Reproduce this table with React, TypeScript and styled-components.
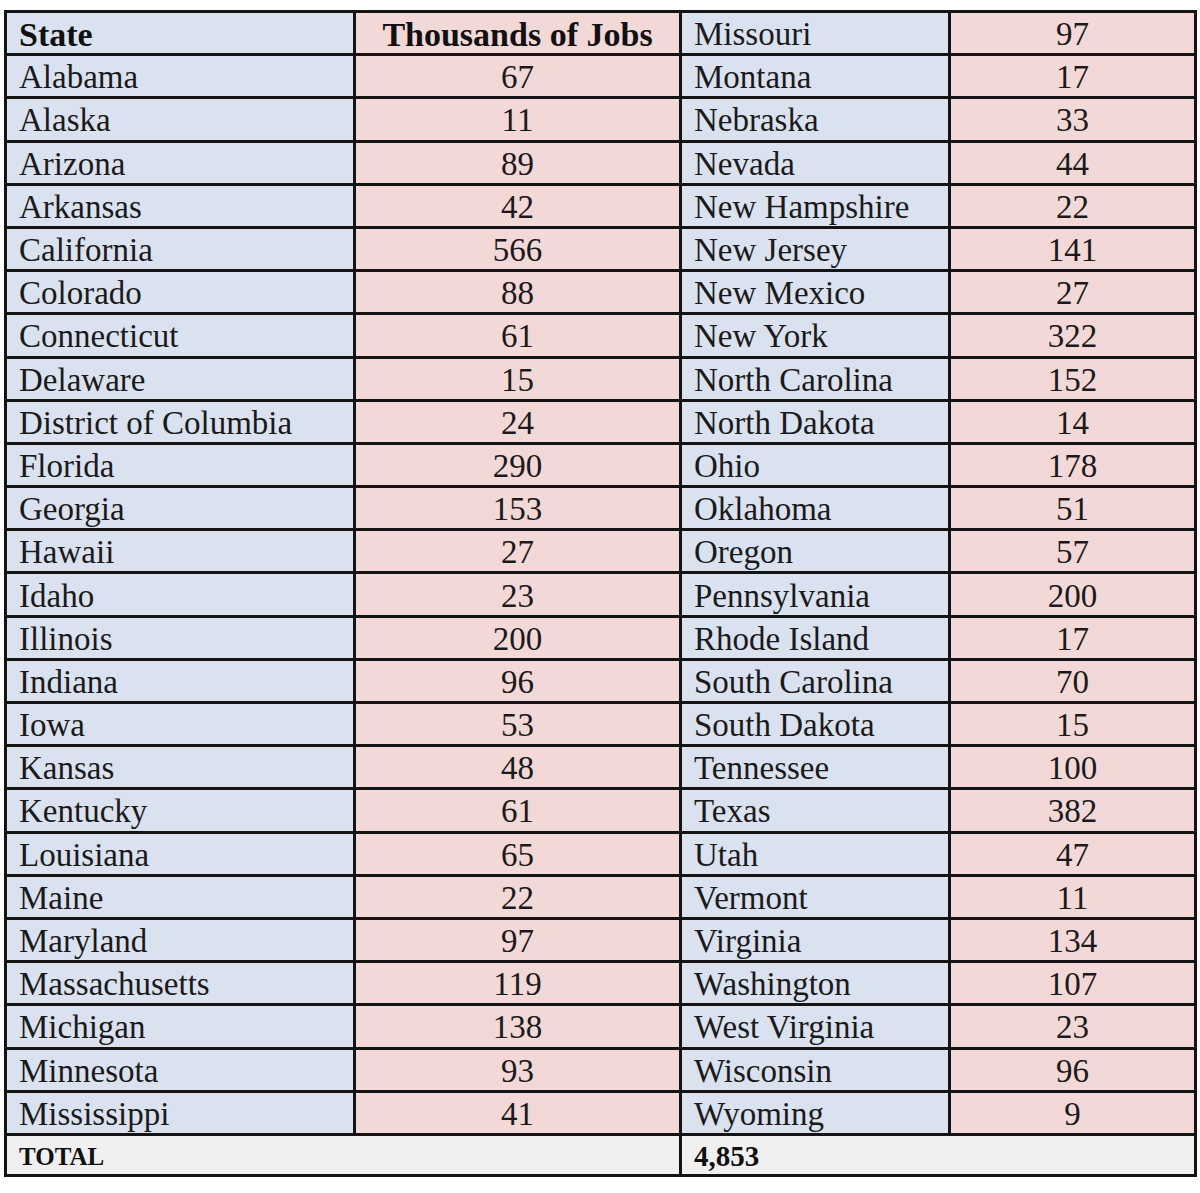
import React from "react";
import styled, { createGlobalStyle } from "styled-components";

const GlobalStyle = createGlobalStyle`
  html, body { margin: 0; padding: 0; background: #ffffff; }
  body { font-family: "Liberation Serif", "Times New Roman", serif; color: #1a1a1a; }
`;

const Page = styled.div`
  padding: 10px 3px 0 4px;
  width: 1193px;
`;

const Table = styled.div`
  display: grid;
  grid-template-columns: 346px 323px 266px 243px;
  grid-template-rows: repeat(26, 40.2px) 38px;
  gap: 3px;
  padding: 3px;
  background: #141414;
`;

const Cell = styled.div<{ $tone: "blue" | "pink" | "gray"; $align?: "left" | "center"; $span?: number }>`
  background: ${(p) => (p.$tone === "blue" ? "#dae2ef" : p.$tone === "pink" ? "#f3d8d8" : "#f0f0f0")};
  display: flex;
  align-items: center;
  justify-content: ${(p) => (p.$align === "center" ? "center" : "flex-start")};
  padding: 3px 0 0 ${(p) => (p.$align === "center" ? "0" : "12px")};
  font-size: 33px;
  line-height: 1;
  white-space: nowrap;
  ${(p) => (p.$span ? `grid-column: span ${p.$span};` : "")}
`;

const HeadCell = styled(Cell)`
  font-weight: bold;
  font-size: 34px;
  color: #111;
`;

const TotalCell = styled(Cell)<{ $size: number }>`
  font-weight: bold;
  font-size: ${(p) => p.$size}px;
  color: #111;
  padding-left: 12px;
`;

const left: [string, number][] = [
  ["Alabama", 67], ["Alaska", 11], ["Arizona", 89], ["Arkansas", 42], ["California", 566],
  ["Colorado", 88], ["Connecticut", 61], ["Delaware", 15], ["District of Columbia", 24],
  ["Florida", 290], ["Georgia", 153], ["Hawaii", 27], ["Idaho", 23], ["Illinois", 200],
  ["Indiana", 96], ["Iowa", 53], ["Kansas", 48], ["Kentucky", 61], ["Louisiana", 65],
  ["Maine", 22], ["Maryland", 97], ["Massachusetts", 119], ["Michigan", 138],
  ["Minnesota", 93], ["Mississippi", 41],
];

const right: [string, number][] = [
  ["Missouri", 97], ["Montana", 17], ["Nebraska", 33], ["Nevada", 44], ["New Hampshire", 22],
  ["New Jersey", 141], ["New Mexico", 27], ["New York", 322], ["North Carolina", 152],
  ["North Dakota", 14], ["Ohio", 178], ["Oklahoma", 51], ["Oregon", 57], ["Pennsylvania", 200],
  ["Rhode Island", 17], ["South Carolina", 70], ["South Dakota", 15], ["Tennessee", 100],
  ["Texas", 382], ["Utah", 47], ["Vermont", 11], ["Virginia", 134], ["Washington", 107],
  ["West Virginia", 23], ["Wisconsin", 96], ["Wyoming", 9],
];

export default function App() {
  return (
    <Page>
      <GlobalStyle />
      <Table>
        <HeadCell $tone="blue">State</HeadCell>
        <HeadCell $tone="pink" $align="center">Thousands of Jobs</HeadCell>
        <Cell $tone="blue">{right[0][0]}</Cell>
        <Cell $tone="pink" $align="center">{right[0][1]}</Cell>
        {left.map(([name, val], i) => (
          <React.Fragment key={name}>
            <Cell $tone="blue">{name}</Cell>
            <Cell $tone="pink" $align="center">{val}</Cell>
            <Cell $tone="blue">{right[i + 1][0]}</Cell>
            <Cell $tone="pink" $align="center">{right[i + 1][1]}</Cell>
          </React.Fragment>
        ))}
        <TotalCell $tone="gray" $span={2} $size={25}>TOTAL</TotalCell>
        <TotalCell $tone="gray" $span={2} $size={29}>4,853</TotalCell>
      </Table>
    </Page>
  );
}
